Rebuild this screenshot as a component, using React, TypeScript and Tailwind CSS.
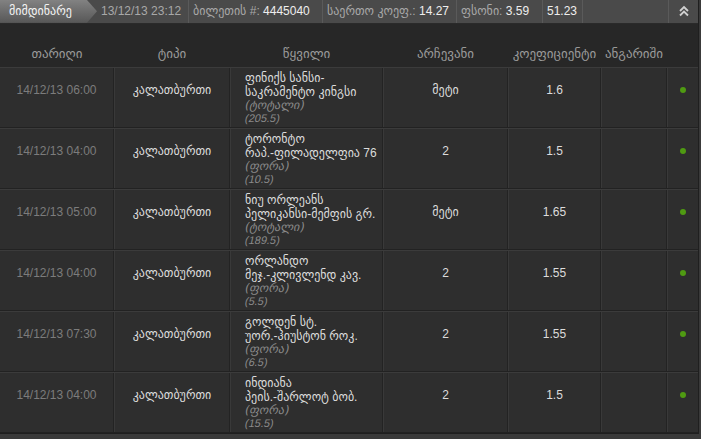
import React from "react";

const rows = [
  { date: "14/12/13 06:00", type: "კალათბურთი", l1: "ფინიქს სანსი-", l2: "საკრამენტო კინგსი", k: "(ტოტალი)", v: "(205.5)", choice: "მეტი", odd: "1.6" },
  { date: "14/12/13 04:00", type: "კალათბურთი", l1: "ტორონტო", l2: "რაპ.-ფილადელფია 76", k: "(ფორა)", v: "(10.5)", choice: "2", odd: "1.5" },
  { date: "14/12/13 05:00", type: "კალათბურთი", l1: "ნიუ ორლეანს", l2: "პელიკანსი-მემფის გრ.", k: "(ტოტალი)", v: "(189.5)", choice: "მეტი", odd: "1.65" },
  { date: "14/12/13 04:00", type: "კალათბურთი", l1: "ორლანდო", l2: "მეჯ.-კლივლენდ კავ.", k: "(ფორა)", v: "(5.5)", choice: "2", odd: "1.55" },
  { date: "14/12/13 07:30", type: "კალათბურთი", l1: "გოლდენ სტ.", l2: "უორ.-ჰიუსტონ როკ.", k: "(ფორა)", v: "(6.5)", choice: "2", odd: "1.55" },
  { date: "14/12/13 04:00", type: "კალათბურთი", l1: "ინდიანა", l2: "პეის.-შარლოტ ბობ.", k: "(ფორა)", v: "(15.5)", choice: "2", odd: "1.5" },
];

const cell = "border-l border-l-[#393939] border-r border-r-[#232323]";

export default function App() {
  return (
    <div
      className="w-[701px] h-[439px] bg-[#3a3a3a] overflow-hidden text-[12px]"
      style={{ fontFamily: '"Liberation Sans", "DejaVu Sans", sans-serif' }}
    >
      <div className="w-[699px] h-[434px] bg-[#272727] border-r border-r-[#1f1f1f] border-b border-b-[#1f1f1f] flex flex-col">
        {/* top bar */}
        <div className="h-[24px] flex items-stretch bg-[#4a4a4a] border-b border-b-[#2a2a2a] text-[#a8a8a8]">
          <div className="w-[97px] flex items-center pl-[9px] text-[#f4f4f4] bg-gradient-to-b from-[#828282] to-[#575757] [clip-path:polygon(0_0,87px_0,97px_50%,87px_100%,0_100%)]">
            მიმდინარე
          </div>
          <div className="w-[92px] flex items-center pl-[4px] border-r border-r-[#5a5a5a] whitespace-nowrap">13/12/13 23:12</div>
          <div className="w-[134px] flex items-center pl-[4px] border-r border-r-[#5a5a5a] whitespace-nowrap">
            ბილეთის #:&nbsp;<span className="text-[#eeeeee]">4445040</span>
          </div>
          <div className="w-[134px] flex items-center pl-[4px] border-r border-r-[#5a5a5a] whitespace-nowrap">
            საერთო კოეფ.:&nbsp;<span className="text-[#eeeeee]">14.27</span>
          </div>
          <div className="w-[86px] flex items-center pl-[4px] border-r border-r-[#5a5a5a] whitespace-nowrap">
            ფსონი:&nbsp;<span className="text-[#eeeeee]">3.59</span>
          </div>
          <div className="w-[40px] flex items-center pl-[4px] border-r border-r-[#5a5a5a] text-[#eeeeee]">51.23</div>
          <div className="flex-1 border-r border-r-[#5a5a5a]"></div>
          <div className="w-[29px] flex items-center justify-center text-[#d0d0d0]">
            <svg width="12" height="12" viewBox="0 0 12 12" fill="none" stroke="currentColor" strokeWidth="1.8">
              <path d="M2 6 L6 2 L10 6" />
              <path d="M2 10.5 L6 6.5 L10 10.5" />
            </svg>
          </div>
        </div>
        {/* header */}
        <div className="h-[44px] flex items-end pb-[4px] text-[#9a9a9a] text-[13px]">
          <div className="w-[114px] text-center">თარიღი</div>
          <div className="w-[116px] text-center">ტიპი</div>
          <div className="w-[153px] text-center">წყვილი</div>
          <div className="w-[125px] text-center">არჩევანი</div>
          <div className="w-[93px] text-center whitespace-nowrap">კოეფიციენტი</div>
          <div className="w-[66px] text-center">ანგარიში</div>
        </div>
        {/* rows */}
        <div className="flex flex-col">
          {rows.map((r, i) => (
            <div key={i} className="h-[61px] flex bg-[#2e2e2e] border-t border-t-[#3b3b3b] border-b border-b-[#222222]">
              <div className={`w-[114px] text-center pt-[13px] text-[#7c7c7c] ${cell} border-l-0`}>{r.date}</div>
              <div className={`w-[116px] text-center pt-[13px] text-[#dcdcdc] ${cell}`}>{r.type}</div>
              <div className={`w-[153px] pl-[14px] pt-[3px] text-[#dcdcdc] leading-[14px] ${cell}`}>
                <div className="whitespace-nowrap">{r.l1}</div>
                <div className="whitespace-nowrap">{r.l2}</div>
                <div className="text-[#8a8a8a] text-[12px] leading-[13px] font-['DejaVu_Sans',sans-serif]">
                  <span className="inline-block [transform:skewX(-12deg)]">{r.k}</span>
                </div>
                <div className="text-[#8a8a8a] text-[11px] leading-[13px]">
                  <span className="inline-block [transform:skewX(-12deg)]">{r.v}</span>
                </div>
              </div>
              <div className={`w-[125px] text-center pt-[13px] text-[#dcdcdc] ${cell}`}>{r.choice}</div>
              <div className={`w-[93px] text-center pt-[13px] text-[#dcdcdc] ${cell}`}>{r.odd}</div>
              <div className={`w-[66px] ${cell}`}></div>
              <div className={`flex-1 flex justify-center pt-[19px] ${cell} border-r-0`}>
                <div className="w-[6px] h-[6px] rounded-full bg-[#4f9a12]"></div>
              </div>
            </div>
          ))}
        </div>
      </div>
    </div>
  );
}
